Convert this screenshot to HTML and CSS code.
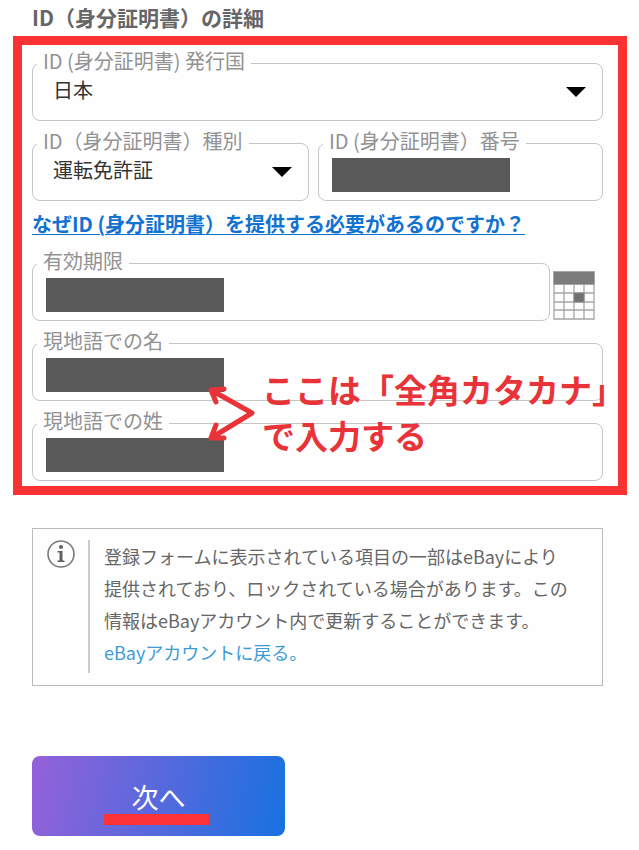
FILE: index.html
```html
<!DOCTYPE html>
<html lang="ja">
	<head>
		<meta charset="UTF-8" />
		<meta name="viewport" content="width=device-width, initial-scale=1" />
		<title>ID（身分証明書）の詳細</title>
		<link rel="stylesheet" href="styles.css">
	</head>

	<body>
		<form>
			<h1>ID（身分証明書）の詳細</h1>

			<div class="frame">
				<fieldset class="field">
					<legend><label for="country">ID (身分証明書) 発行国</label></legend>
					<select id="country">
						<option>日本</option>
					</select>
					<span class="arrow"></span>
				</fieldset>

				<div class="row">
					<fieldset class="field kind">
						<legend><label for="kind">ID（身分証明書）種別</label></legend>
						<select id="kind">
							<option>運転免許証</option>
						</select>
						<span class="arrow"></span>
					</fieldset>
					<fieldset class="field number">
						<legend><label for="number">ID (身分証明書）番号</label></legend>
						<input type="text" id="number" />
						<span class="mask"></span>
					</fieldset>
				</div>

				<a class="why" href="#">なぜID (身分証明書）を提供する必要があるのですか？</a>

				<div class="row date">
					<fieldset class="field">
						<legend><label for="expiry">有効期限</label></legend>
						<input type="text" id="expiry" />
						<span class="mask"></span>
					</fieldset>
					<button type="button" class="calendar" aria-label="カレンダー">
						<svg width="42" height="49" viewBox="0 0 42 49">
							<path d="M1 13V48H41V13M11 13V48M21 13V48M31 13V48M1 22H41M1 31H41M1 39H41" fill="none" stroke="#a6a6a6" stroke-width="1.3" />
							<rect x="0.5" y="0.5" width="41" height="13" fill="#7c7c7c" stroke="#a6a6a6" />
							<rect x="21" y="22" width="10" height="9" fill="#707070" stroke="#8a8a8a" />
						</svg>
					</button>
				</div>

				<fieldset class="field">
					<legend><label for="first">現地語での名</label></legend>
					<input type="text" id="first" />
					<span class="mask"></span>
				</fieldset>

				<fieldset class="field">
					<legend><label for="last">現地語での姓</label></legend>
					<input type="text" id="last" />
					<span class="mask"></span>
				</fieldset>

				<div class="note">
					<svg width="48" height="58" viewBox="0 0 48 58">
						<path d="M16 4L3 5L8 17M3 5L44 28L3 53M8 40L3 53L16 53" fill="none" stroke="#e83438" stroke-width="5" stroke-linecap="round" stroke-linejoin="round" />
					</svg>
					<p>ここは「全角カタカナ」<br>で入力する</p>
				</div>
			</div>

			<div class="info">
				<svg width="28" height="28" viewBox="0 0 28 28">
					<circle cx="14" cy="14" r="13" fill="none" stroke="#7a7a7a" stroke-width="1.6" />
					<circle cx="14" cy="7" r="2" fill="#606060" />
					<path d="M10.500 11H15.500V20.500H17.500V22H10.500V20.500H12.500V12.500H10.500Z" fill="#606060" />
				</svg>
				<p>
					登録フォームに表示されている項目の一部はeBayにより<br>
					提供されており、ロックされている場合があります。この<br>
					情報はeBayアカウント内で更新することができます。<br>
					<a href="#">eBayアカウントに戻る。</a>
				</p>
			</div>

			<button type="submit" class="next">次へ</button>
		</form>
	</body>
</html>
```
FILE: styles.css
```css
* {
	box-sizing: border-box;
}
body {
	background-color: #fefefe;
	color: #555;
	font-family: "Noto Sans CJK JP", sans-serif;
	margin: 0;
}
h1 {
	color: #666;
	font-size: 21px;
	font-weight: 700;
	line-height: 34px;
	margin: 0 32px;
	padding-bottom: 2px;
}
.frame {
	border: 9px solid #fa3234;
	display: flex;
	flex-direction: column;
	gap: 10px;
	margin: 0 12px 0 13px;
	padding: 6px 15px 5px 10px;
	position: relative;
}
.row {
	display: flex;
	gap: 9px;
}
.kind {
	flex: 34;
}
.number {
	flex: 35;
}

/* fields with the label set into the top border */
.field {
	border: 1px solid #c6c6c6;
	border-radius: 8px;
	height: 70px;
	margin: 0;
	min-width: 0;
	padding: 0;
	position: relative;
}
legend {
	color: #929292;
	font-size: 20px;
	line-height: 20px;
	margin-left: 4px;
	padding: 0 6px 4px;
	white-space: nowrap;
}
select,
.field input {
	appearance: none;
	background: none;
	border: none;
	color: #333;
	display: block;
	font-family: inherit;
	font-size: 20px;
	height: 44px;
	line-height: 28px;
	padding: 0 40px 14px 20px;
	width: 100%;
}
.arrow {
	border: 10px solid transparent;
	border-bottom: none;
	border-top-color: #000;
	pointer-events: none;
	position: absolute;
	right: 16px;
	top: 12px;
}
.mask {
	background-color: #595959;
	height: 34px;
	left: 13px;
	pointer-events: none;
	position: absolute;
	top: 3px;
	width: 178px;
}
.why {
	color: #1272d2;
	font-size: 20px;
	font-weight: 700;
	line-height: 26px;
	padding-bottom: 4px;
	text-decoration-thickness: 1px;
	text-underline-offset: 2px;
	white-space: nowrap;
}
.date {
	align-items: flex-end;
	gap: 3px;
	padding-right: 8px;
}
.date .field {
	flex: 1;
}
.calendar {
	background: none;
	border: none;
	cursor: pointer;
	height: 51px;
	padding: 0;
}
.calendar svg {
	display: block;
}

/* red remark over the name fields */
.note {
	color: #e83438;
	left: 186px;
	pointer-events: none;
	position: absolute;
	top: 321px;
}
.note svg {
	left: 0;
	position: absolute;
	top: 19px;
}
.note p {
	font-size: 33px;
	font-weight: 700;
	line-height: 46px;
	margin: 0 0 0 54px;
	white-space: nowrap;
}

.info {
	border: 1px solid #bbb;
	display: flex;
	gap: 13px;
	margin: 33px 36px 0 32px;
	padding: 11px 14px 12px;
}
.info svg {
	flex: none;
}
.info p {
	border-left: 2px solid #ccc;
	color: #666;
	font-size: 18px;
	line-height: 32px;
	margin: 0;
	padding: 0 0 5px 14px;
}
.info a {
	color: #3d9bd6;
	text-decoration: none;
}
.next {
	background: linear-gradient(100deg, #9561d9, #1871e0);
	border: none;
	border-radius: 8px;
	color: #fff;
	cursor: pointer;
	display: block;
	font-family: inherit;
	font-size: 27px;
	height: 80px;
	margin: 70px 32px 14px;
	position: relative;
	width: 253px;
}
.next::after {
	background-color: #fc3336;
	bottom: 11px;
	content: "";
	height: 11px;
	left: 72px;
	position: absolute;
	width: 105px;
}
```
